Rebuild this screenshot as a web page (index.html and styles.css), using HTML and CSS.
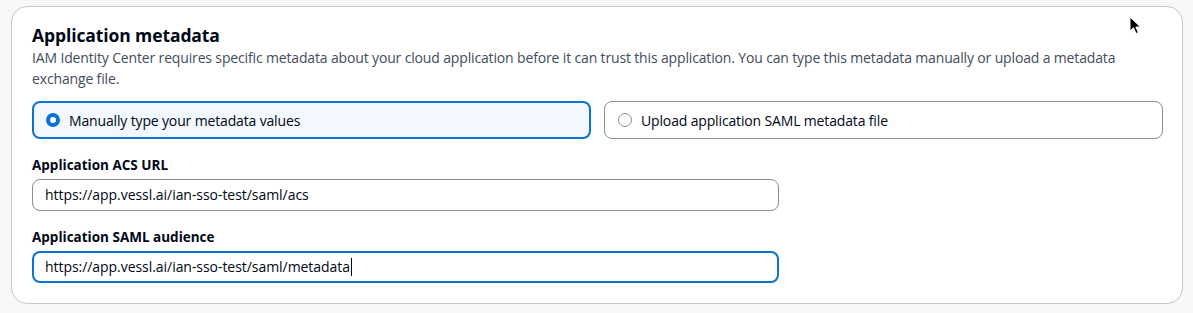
FILE: index.html
```html
<!DOCTYPE html>
<html lang="en">
<head>
    <meta charset="UTF-8">
    <meta name="viewport" content="width=device-width, initial-scale=1.0">
    <title>Application metadata</title>
    <link rel="stylesheet" href="styles.css">
</head>
<body>
    <div class="container">
        <h2>Application metadata</h2>
        <p class="description">IAM Identity Center requires specific metadata about your cloud application before it can trust this application. You can type this metadata manually or upload a metadata exchange file.</p>

        <div class="tiles">
            <div class="tile selected">
                <span class="radio"></span>
                <span>Manually type your metadata values</span>
            </div>
            <div class="tile">
                <span class="radio"></span>
                <span>Upload application SAML metadata file</span>
            </div>
        </div>

        <div class="form-field">
            <label>Application ACS URL</label>
            <div class="input">https://app.vessl.ai/ian-sso-test/saml/acs</div>
        </div>

        <div class="form-field">
            <label>Application SAML audience</label>
            <div class="input focused">https://app.vessl.ai/ian-sso-test/saml/metadata<span class="caret"></span></div>
        </div>
    </div>

    <!-- mouse pointer -->
    <svg class="pointer" width="14" height="20" viewBox="0 0 14 20">
        <path d="M1 1 L1 15 L4.5 11.8 L7 17.5 L9.3 16.5 L6.9 11 L11.5 11 Z" fill="#000" stroke="#fff" stroke-width="1"/>
    </svg>
</body>
</html>
```

FILE: styles.css
```css
body, html {
    margin: 0;
    padding: 0;
}
body {
    background-color: #f8f8f8;
    font-family: 'Open Sans', 'Noto Sans', sans-serif;
    color: #000716;
    padding: 6px 10px 0 11px;
}
.container {
    background-color: white;
    border: 1px solid #c6c6cd;
    border-radius: 16px;
    padding: 16px 19px 20px 20px;
    width: 1131px;
}
h2 {
    margin: 0;
    font-size: 17.5px;
    line-height: 24px;
    font-weight: bold;
    letter-spacing: -0.1px;
}
.description {
    margin: 0 0 12px 0;
    font-size: 14px;
    line-height: 21px;
    color: #414d5c;
    letter-spacing: -0.15px;
}
.tiles {
    display: grid;
    grid-template-columns: 1fr 1fr;
    gap: 13px;
    margin-bottom: 17px;
}
.tile {
    display: flex;
    align-items: center;
    gap: 9px;
    height: 36px;
    padding: 0 13px;
    border: 1px solid #8c8c94;
    border-radius: 8px;
    font-size: 14px;
    letter-spacing: -0.15px;
}
.tile.selected {
    border: 2px solid #0972d3;
    background-color: #f2f8fd;
    height: 34px;
    padding: 0 12px;
}
.radio {
    width: 12px;
    height: 12px;
    border: 1px solid #8c8c94;
    border-radius: 50%;
    box-sizing: content-box;
}
.selected .radio {
    width: 6px;
    height: 6px;
    border: 4px solid #0972d3;
    background-color: white;
}
.form-field {
    margin-bottom: 17px;
}
.form-field:last-child {
    margin-bottom: 0;
}
label {
    display: block;
    font-size: 13.5px;
    font-weight: bold;
    line-height: 18px;
    margin-bottom: 5px;
}
.input {
    width: 721px;
    height: 30px;
    padding: 0 12px;
    border: 1px solid #8c8c94;
    border-radius: 8px;
    font-size: 14px;
    letter-spacing: -0.05px;
    line-height: 30px;
    display: flex;
    align-items: center;
}
.input.focused {
    border: 2px solid #0972d3;
    height: 28px;
    padding: 0 11px;
}
.caret {
    display: inline-block;
    width: 1px;
    height: 18px;
    background-color: #000;
    margin-left: 1px;
}
.pointer {
    position: absolute;
    left: 1129px;
    top: 16px;
}
```
